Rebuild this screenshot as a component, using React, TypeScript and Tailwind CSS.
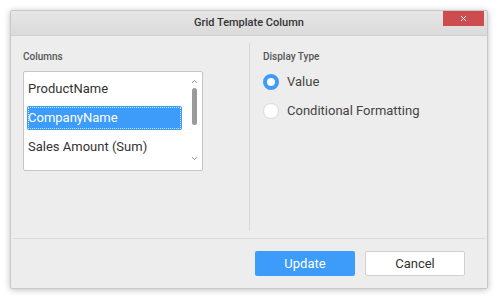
import { ChevronUp, ChevronDown, X } from 'lucide-react'

export default function App() {
  return (
    <div className="w-[499px] h-[299px] bg-white p-[10px] pr-[11px] pb-[10px]" style={{ fontFamily: 'Roboto, "Liberation Sans", sans-serif' }}>
      <div className="flex flex-col h-full bg-[#ededed] border border-[#c8c8c8] rounded-[2px] shadow-[0_1px_6px_rgba(0,0,0,0.25)]">
        {/* title bar */}
        <div className="relative flex items-center justify-center h-[25px] bg-gradient-to-b from-[#e6e6e6] to-[#dadada] border-b border-[#cfcfcf]">
          <span className="text-[11px] font-medium text-[#333]">Grid Template Column</span>
          <button className="absolute right-[3px] top-0 w-[41px] h-[15px] flex items-center justify-center bg-[#cd4c4f]">
            <X size={9} strokeWidth={2.5} className="text-white" />
          </button>
        </div>

        {/* content */}
        <div className="flex flex-1">
          <div className="w-[238px] pl-[12px] pt-[13px]">
            <div className="text-[10px] font-medium text-[#555] mb-[7px]">Columns</div>
            <div className="relative w-[180px] h-[100px] bg-white border border-[#c6c6c6] rounded-[2px] overflow-hidden">
              <div className="pt-[5px] pl-[3px] pr-[20px]">
                <div className="h-[24px] flex items-center pl-[1px] text-[13px] text-[#333]">ProductName</div>
                <div className="h-[24px] flex items-center pl-[1px] text-[13px] text-white bg-[#3d9bfa] rounded-[2px] outline outline-1 outline-dotted outline-[#cfe4ff] outline-offset-[-2px] my-[5px]">CompanyName</div>
                <div className="h-[24px] flex items-center pl-[1px] text-[13px] text-[#333]">Sales Amount (Sum)</div>
              </div>
              <div className="absolute right-0 top-0 bottom-0 w-[16px] flex flex-col items-center">
                <ChevronUp size={9} strokeWidth={2.5} className="text-[#888] mt-[5px]" />
                <div className="w-[5px] h-[37px] bg-[#9a9a9a] rounded-full mt-[2px]" />
                <div className="flex-1" />
                <ChevronDown size={9} strokeWidth={2.5} className="text-[#888] mb-[7px]" />
              </div>
            </div>
          </div>
          <div className="w-px bg-[#d8d8d8] mt-[7px] mb-[7px]" />
          <div className="flex-1 pl-[13px] pt-[13px]">
            <div className="text-[10px] font-medium text-[#555] mb-[9px]">Display Type</div>
            <div className="flex items-center gap-[8px] h-[18px]">
              <div className="w-[16px] h-[16px] rounded-full border-[4px] border-[#3d9bfa] bg-white" />
              <span className="text-[13px] text-[#444]">Value</span>
            </div>
            <div className="flex items-center gap-[8px] h-[18px] mt-[11px]">
              <div className="w-[16px] h-[16px] rounded-full border border-[#dcdcdc] bg-white" />
              <span className="text-[13px] text-[#444]">Conditional Formatting</span>
            </div>
          </div>
        </div>

        {/* footer */}
        <div className="mx-[2px] border-t border-[#dadada] h-[50px] flex items-center justify-end gap-[10px] pr-[20px]">
          <button className="w-[100px] h-[25px] bg-[#3d9bfa] rounded-[2px] text-[13px] text-white">Update</button>
          <button className="w-[100px] h-[25px] bg-white border border-[#d0d0d0] rounded-[2px] text-[13px] text-[#333]">Cancel</button>
        </div>
      </div>
    </div>
  )
}
